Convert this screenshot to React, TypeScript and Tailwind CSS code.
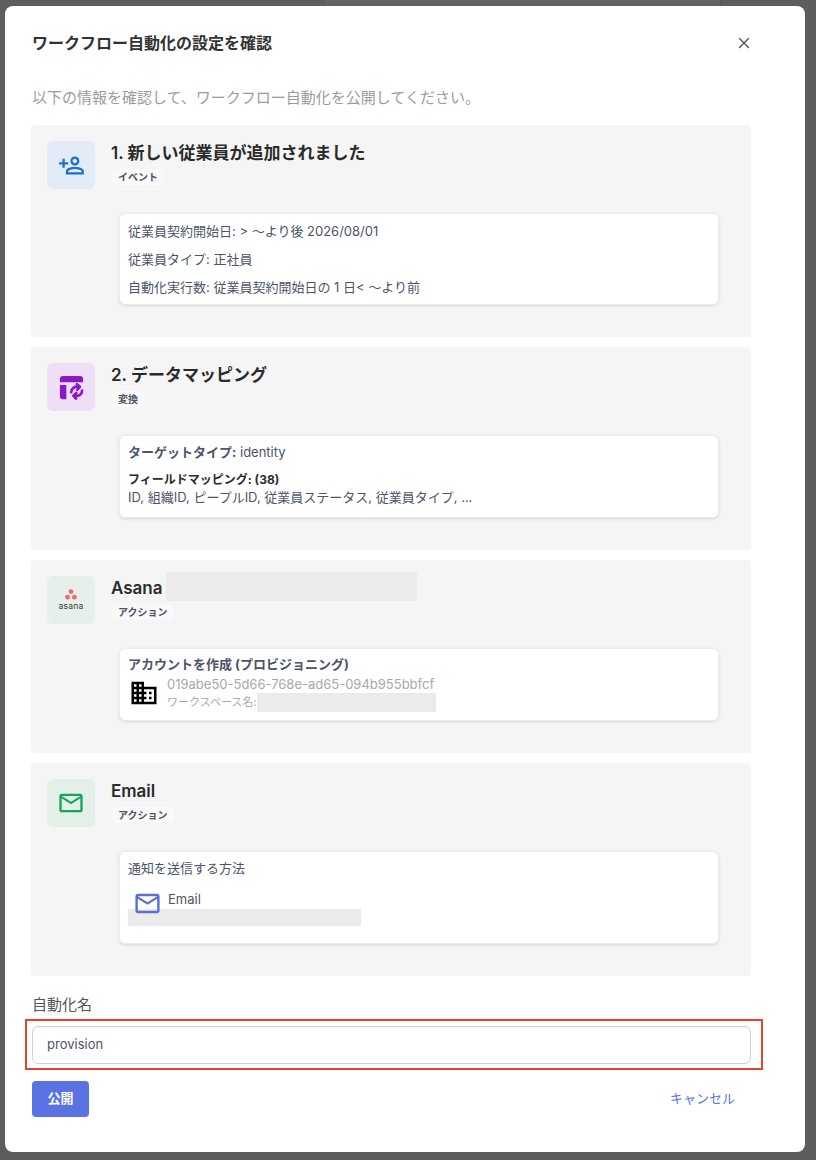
import React from "react";
import { MdOutlinePersonAddAlt, MdBusiness, MdMailOutline } from "react-icons/md";

const font = { fontFamily: 'Inter, "Noto Sans CJK JP", sans-serif' };

function Badge({ children }: { children: React.ReactNode }) {
  return (
    <span className="flex items-center h-[16px] px-[6px] rounded-[4px] bg-[#f9f9f9] text-[10px] font-bold text-[#4a5466] leading-none">
      {children}
    </span>
  );
}

function TableConvertIcon() {
  const c = "#8a17c9";
  return (
    <svg width="31" height="31" viewBox="0 0 24 24" fill="none">
      <path d="M3 5.5A2.5 2.5 0 0 1 5.5 3h13A2.5 2.5 0 0 1 21 5.5V8H3z" fill={c} />
      <path d="M3 10h5v11H5.5A2.5 2.5 0 0 1 3 18.5z" fill={c} />
      <path d="M11.8 15.6C11.8 12.6 14.2 11 17.8 11.4" stroke={c} strokeWidth="2.1" strokeLinecap="round" />
      <path d="M16.2 9.4l2.3 2.1-2 2.2" stroke={c} strokeWidth="2.1" strokeLinecap="round" strokeLinejoin="round" />
      <path d="M20.2 14.4C20.2 17.4 17.8 19 14.2 18.6" stroke={c} strokeWidth="2.1" strokeLinecap="round" />
      <path d="M15.8 16.3l-2.3 2.1 2 2.2" stroke={c} strokeWidth="2.1" strokeLinecap="round" strokeLinejoin="round" />
    </svg>
  );
}

function AsanaLogo() {
  return (
    <div className="flex flex-col items-center">
      <svg width="14" height="11" viewBox="0 0 14 11">
        <circle cx="7" cy="2.6" r="2.4" fill="#f06a6a" />
        <circle cx="3.6" cy="8.2" r="2.4" fill="#f06a6a" />
        <circle cx="10.4" cy="8.2" r="2.4" fill="#f06a6a" />
      </svg>
      <span className="text-[8.5px] leading-[10px] text-[#3a3a3a] tracking-[0.2px] mt-[1px]">asana</span>
    </div>
  );
}

function Step({
  iconBg,
  icon,
  title,
  titleExtra,
  badge,
  children,
}: {
  iconBg: string;
  icon: React.ReactNode;
  title: React.ReactNode;
  titleExtra?: React.ReactNode;
  badge: string;
  children: React.ReactNode;
}) {
  return (
    <div className="bg-[#f5f5f5] rounded-[4px] pt-4 pb-8 pl-4 pr-4">
      <div className="flex gap-4 h-12">
        <div className={`w-12 h-12 rounded-[6px] flex items-center justify-center shrink-0 ${iconBg}`}>
          {icon}
        </div>
        <div className="flex flex-col">
          <div className="flex items-center h-[24px] mt-[0px]">
            <span className="text-[17px] font-semibold text-[#2b2b2b] leading-[24px]">{title}</span>
            {titleExtra}
          </div>
          <div className="flex mt-[4px] ml-[1px]">
            <Badge>{badge}</Badge>
          </div>
        </div>
      </div>
      <div className="ml-[72px] mr-4 mt-6 bg-white rounded-[6px] border border-[#ececec] shadow-[0_1px_3px_rgba(0,0,0,0.12)]">
        {children}
      </div>
    </div>
  );
}

export default function App() {
  return (
    <div className="min-h-[1160px] bg-[#5d5d5d] overflow-hidden" style={font}>
      <div className="h-[6px] overflow-hidden flex">
        <div className="ml-[325px] w-[396px] h-[6px] bg-[#636363] border-r border-[#555]" />
      </div>
      <div className="ml-[5px] w-[800px] h-[1146px] bg-white rounded-[8px] pl-[26px] pr-[54px] pt-[28px]">
        <div className="flex items-center justify-between h-[18px]">
          <h1 className="ml-[1px] text-[16px] font-bold text-[#333] leading-[18px]">ワークフロー自動化の設定を確認</h1>
          <svg width="12" height="12" viewBox="0 0 12 12" className="mr-[1px]">
            <path d="M1.5 1.5l9 9M10.5 1.5l-9 9" stroke="#555" strokeWidth="1.4" strokeLinecap="round" />
          </svg>
        </div>
        <p className="mt-[36px] ml-[1px] text-[15px] text-[#9b9b9b] leading-[20px]">
          以下の情報を確認して、ワークフロー自動化を公開してください。
        </p>
        <div className="mt-[17px] flex flex-col gap-[10px]">
          <Step
            iconBg="bg-[#e3ebf7]"
            icon={<MdOutlinePersonAddAlt size={27} color="#1c6fd1" className="-scale-x-100" />}
            title="1. 新しい従業員が追加されました"
            badge="イベント"
          >
            <div className="px-2 pt-[7px] pb-[7px] flex flex-col gap-2 text-[13px] leading-5 text-[#4c5567]">
              <p>従業員契約開始日: &gt; ～より後 2026/08/01</p>
              <p>従業員タイプ: 正社員</p>
              <p>自動化実行数: 従業員契約開始日の 1 日&lt; ～より前</p>
            </div>
          </Step>
          <Step
            iconBg="bg-[#efdff6]"
            icon={<TableConvertIcon />}
            title="2. データマッピング"
            badge="変換"
          >
            <div className="px-2 pt-[6px] pb-[11px] flex flex-col">
              <p className="text-[13px] leading-5 text-[#4c5567]">
                <span className="font-bold">ターゲットタイプ:</span> identity
              </p>
              <p className="mt-[10px] text-[12px] leading-[16px] font-bold text-[#2b2b2b]">フィールドマッピング: (38)</p>
              <p className="text-[13px] leading-[18px] text-[#4c5567]">
                ID, 組織ID, ピープルID, 従業員ステータス, 従業員タイプ, ...
              </p>
            </div>
          </Step>
          <Step
            iconBg="bg-[#e6efe9]"
            icon={<AsanaLogo />}
            title="Asana"
            titleExtra={<span className="ml-[3px] w-[251px] h-[29px] bg-[#ebebeb] mt-[-3px]" />}
            badge="アクション"
          >
            <div className="px-2 pt-[5px] pb-[8px]">
              <p className="text-[13px] leading-5 font-bold text-[#4c5567]">アカウントを作成 (プロビジョニング)</p>
              <div className="flex gap-[8px] mt-[1px]">
                <div className="pt-[3px] pl-[1px]">
                  <MdBusiness size={30} color="#000" />
                </div>
                <div className="flex flex-col">
                  <span className="text-[13px] leading-[18px] text-[#a8a8a8]">019abe50-5d66-768e-ad65-094b955bbfcf</span>
                  <div className="flex items-center">
                    <span className="text-[11px] leading-[19px] text-[#aaa]">ワークスペース名:</span>
                    <span className="w-[179px] h-[19px] bg-[#ebebeb]" />
                  </div>
                </div>
              </div>
            </div>
          </Step>
          <Step
            iconBg="bg-[#e3f0e7]"
            icon={<MdMailOutline size={28} color="#1aa35a" />}
            title="Email"
            badge="アクション"
          >
            <div className="px-2 pt-[6px] pb-[17px]">
              <p className="text-[13px] leading-5 text-[#4c5567]">通知を送信する方法</p>
              <div className="flex gap-[6px] mt-[12px] pl-[5px]">
                <div className="mt-[-1px]">
                  <MdMailOutline size={29} color="#5a6fd6" />
                </div>
                <span className="text-[13px] leading-[18px] text-[#4c5567]">Email</span>
              </div>
              <div className="w-[233px] h-[17px] bg-[#ebebeb] -mt-[9px]" />
            </div>
          </Step>
        </div>
        <label className="block mt-[19px] ml-[1px] text-[15px] text-[#555] leading-[20px]">自動化名</label>
        <div className="relative mt-[11px] ml-[1px]">
          <div className="h-[38px] rounded-[6px] border border-[#d2d2d2] bg-white flex items-center px-[14px] text-[13px] text-[#4c5567] shadow-[inset_0_1px_1px_rgba(0,0,0,0.04)]">
            provision
          </div>
          <div className="absolute -left-[7px] -right-[12px] -top-[7px] -bottom-[6px] border-2 border-[#e8432a] pointer-events-none" />
        </div>
        <div className="mt-[17px] ml-[1px] flex items-center justify-between">
          <button className="w-[57px] h-[36px] rounded-[4px] bg-[#5b72e2] text-white text-[13px] font-bold">公開</button>
          <span className="mr-[16px] text-[13px] text-[#5b72e2]">キャンセル</span>
        </div>
      </div>
    </div>
  );
}
